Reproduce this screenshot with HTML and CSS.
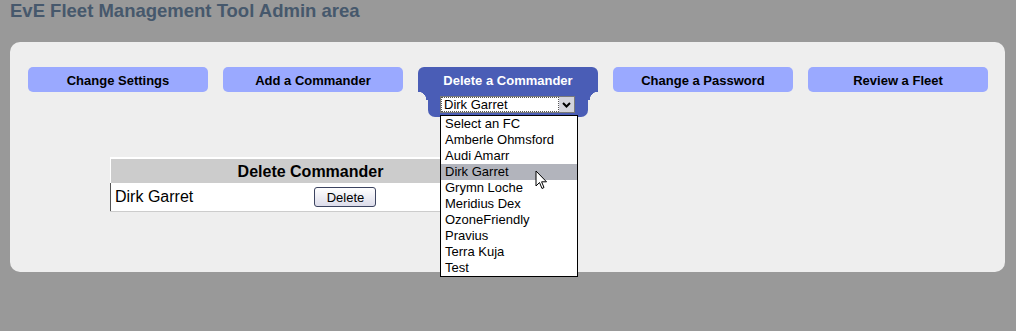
FILE: index.html
```html
<!DOCTYPE html>
<html lang="en">
<head>
    <meta charset="UTF-8">
    <title>EvE Fleet Management Tool Admin area</title>
    <link rel="stylesheet" href="styles.css">
</head>
<body>
    <h1 class="title">EvE Fleet Management Tool Admin area</h1>
    <div class="panel">
        <div class="menu">
            <a class="menu-btn" href="#">Change Settings</a>
            <a class="menu-btn" href="#">Add a Commander</a>
            <div class="menu-btn active">
                Delete a Commander
                <div class="tab-drop">
                    <div class="fake-select">
                        <span class="fake-value">Dirk Garret</span>
                        <span class="fake-arrow">
                            <svg width="9" height="6" viewBox="0 0 9 6"><path d="M1 1 L4.5 4.5 L8 1" fill="none" stroke="#000" stroke-width="2"/></svg>
                        </span>
                    </div>
                    <ul class="options">
                        <li>Select an FC</li>
                        <li>Amberle Ohmsford</li>
                        <li>Audi Amarr</li>
                        <li class="hover">Dirk Garret</li>
                        <li>Grymn Loche</li>
                        <li>Meridius Dex</li>
                        <li>OzoneFriendly</li>
                        <li>Pravius</li>
                        <li>Terra Kuja</li>
                        <li>Test</li>
                    </ul>
                    <svg class="cursor" width="13" height="20" viewBox="0 0 13 20"><path d="M1 1 L1 16 L4.5 12.5 L7 18.5 L9 17.5 L6.6 11.8 L11.5 11.8 Z" fill="#fff" stroke="#000" stroke-width="1"/></svg>
                </div>
            </div>
            <a class="menu-btn" href="#">Change a Password</a>
            <a class="menu-btn" href="#">Review a Fleet</a>
        </div>

        <table class="del-table">
            <tr>
                <th colspan="2">Delete Commander</th>
            </tr>
            <tr>
                <td>Dirk Garret</td>
                <td><button class="del-btn">Delete</button></td>
            </tr>
        </table>
    </div>
</body>
</html>
```

FILE: styles.css
```css
body {
    margin: 0;
    padding: 0;
    background: #999999;
    font-family: "Liberation Sans", Arial, sans-serif;
    height: 331px;
    overflow: hidden;
}

.title {
    margin: 0;
    padding: 0 10px;
    height: 42px;
    font-size: 18.5px;
    line-height: 22px;
    color: #46586c;
}

.panel {
    margin-left: 10px;
    width: 995px;
    height: 230px;
    box-sizing: border-box;
    background: #eeeeee;
    border-radius: 10px;
    padding: 25px 0 0 18px;
}

.menu {
    display: flex;
    gap: 15px;
}

.menu-btn {
    position: relative;
    width: 180px;
    height: 25px;
    line-height: 27px;
    text-align: center;
    background: #9aa9ff;
    border-radius: 5px;
    color: #000;
    font-size: 13px;
    font-weight: bold;
    text-decoration: none;
}

.menu-btn.active {
    background: #4a5db6;
    color: #fff;
    border-radius: 6px 6px 0 0;
}

.tab-drop {
    position: absolute;
    left: 10px;
    top: 25px;
    width: 160px;
    height: 25px;
    background: #4a5db6;
    border-radius: 0 0 7px 7px;
}

.tab-drop::before,
.tab-drop::after {
    content: "";
    position: absolute;
    top: 0;
    width: 10px;
    height: 8px;
}

.tab-drop::before {
    left: -10px;
    background: radial-gradient(circle at 0 100%, transparent 8px, #4a5db6 8.5px);
}

.tab-drop::after {
    right: -10px;
    background: radial-gradient(circle at 100% 100%, transparent 8px, #4a5db6 8.5px);
}

.fake-select {
    position: absolute;
    left: 12px;
    top: 4px;
    width: 135px;
    height: 17px;
    box-sizing: border-box;
    background: #fff;
    border: 1px solid #7a7a7a;
    display: flex;
    align-items: center;
    font-weight: normal;
    font-size: 13px;
    line-height: 13px;
    color: #000;
    text-align: left;
}

.fake-value {
    flex: 1;
    margin: 1px;
    padding-left: 2px;
    line-height: 13px;
    outline: 1px dotted #555;
}

.fake-arrow {
    width: 15px;
    height: 15px;
    background: #d4d4dc;
    display: flex;
    align-items: center;
    justify-content: center;
}

.options {
    position: absolute;
    left: 12px;
    top: 23px;
    width: 138px;
    margin: 0;
    padding: 0;
    list-style: none;
    background: #fff;
    border: 1px solid #000;
    box-sizing: border-box;
    z-index: 2;
}

.options li {
    height: 16px;
    line-height: 16px;
    padding-left: 4px;
    font-size: 13px;
    font-weight: normal;
    color: #000;
    text-align: left;
}

.options li.hover {
    background: #b2b4bc;
}

.cursor {
    position: absolute;
    left: 107px;
    top: 78px;
    z-index: 3;
}

.del-table {
    margin: 65px 0 0 82px;
    width: 400px;
    border-collapse: collapse;
    border-top: 1px solid #555;
    border-left: 1px solid #555;
    border-bottom: 1px solid #ccc;
    font-size: 16px;
}

.del-table th {
    background: #cccccc;
    height: 22px;
    padding: 2px 0 0;
    font-size: 16px;
    border-top: 2px solid #fff;
    border-left: 1px solid #fff;
}

.del-table td {
    background: #fff;
    height: 28px;
    padding: 0 4px;
    width: 192px;
}

.del-btn {
    font-family: "Liberation Sans", Arial, sans-serif;
    font-size: 13px;
    width: 62px;
    height: 20px;
    padding: 0;
    border: 1px solid #3c4460;
    border-radius: 3px;
    background: linear-gradient(#ffffff, #dcdcea);
    color: #000;
}
```
